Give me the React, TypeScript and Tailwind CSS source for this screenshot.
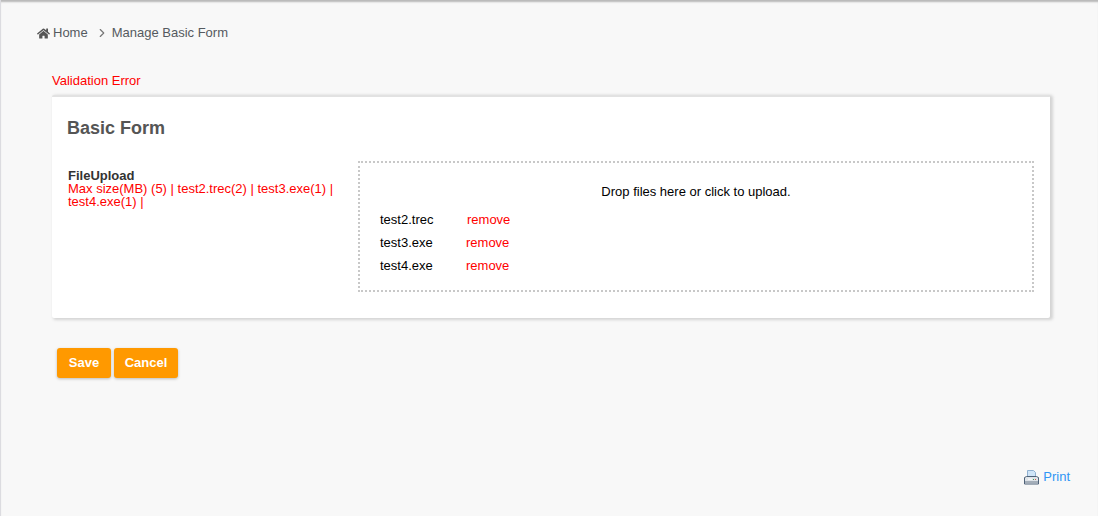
import React from 'react';
import { FaHome } from 'react-icons/fa';
import { FiChevronRight } from 'react-icons/fi';

const files = [
    { name: 'test2.trec', gap: 'w-[87px]' },
    { name: 'test3.exe', gap: 'w-[86px]' },
    { name: 'test4.exe', gap: 'w-[86px]' },
];

const PrintIcon = () => (
    <svg width="15" height="15" viewBox="0 0 15 15" className="shrink-0">
        <path d="M3.5 0.5h6l2 2v5h-8z" fill="#cfe4f7" stroke="#8fb0d0" />
        <path d="M0.5 7.5l2-1h10l2 1v6.5h-14z" fill="#dfe4e9" stroke="#4f6278" />
        <rect x="1" y="11" width="13" height="2.5" fill="#a4aeb9" />
        <rect x="4" y="8.5" width="4" height="1.5" fill="#f4f6f8" />
        <rect x="9" y="9" width="1" height="1" fill="#3aa655" />
        <rect x="11" y="9" width="1" height="1" fill="#d9534f" />
    </svg>
);

const App: React.FC = () => {
    return (
        <div className="flex h-[516px] flex-col overflow-hidden border-l border-[#dcdce0] bg-[#f8f8f8] font-['Liberation_Sans',Arial,sans-serif] shadow-[inset_0_3px_2px_-1px_#b8b8b8]">
            <nav className="ml-[36px] mt-[25px] flex h-[16px] items-center text-[13px] leading-[16px] text-[#555a60]">
                <FaHome className="mr-[3px] text-[13px] text-[#555]" />
                <span>Home</span>
                <FiChevronRight className="ml-[7px] mr-[3px] text-[14px] text-[#777]" />
                <span>Manage Basic Form</span>
            </nav>

            <p className="ml-[51px] mt-[32px] h-[16px] text-[13px] leading-[16px] text-[#ff0000]">Validation Error</p>

            <section className="ml-[51px] mt-[6px] h-[223px] w-[998px] rounded-[2px] border-t-2 border-[#e2e2e2] bg-white shadow-[2px_1px_3px_1px_#d4d4d4]">
                <h2 className="ml-[15px] mt-[21px] h-[21px] text-[18px] font-bold leading-[21px] text-[#555555]">Basic Form</h2>

                <div className="mt-[23px] flex">
                    <div className="ml-[16px] w-[290px] text-[13px] leading-[13px]">
                        <div className="mt-[7px] font-bold text-[#333333]">FileUpload</div>
                        <div className="text-[#ff0000]">
                            Max size(MB) (5) | test2.trec(2) | test3.exe(1) | test4.exe(1) |
                        </div>
                    </div>

                    <div className="-mt-[1px] ml-0 h-[131px] w-[676px] border-2 border-dotted border-[#c8c8c8] pt-[21px] text-[13px] leading-[16px] text-black">
                        <div className="text-center">Drop files here or click to upload.</div>
                        <ul className="ml-[20px] mt-[12px] flex flex-col gap-[7px]">
                            {files.map(file => (
                                <li key={file.name} className="flex h-[16px]">
                                    <span className={file.gap}>{file.name}</span>
                                    <span className="text-[#ff0000]">remove</span>
                                </li>
                            ))}
                        </ul>
                    </div>
                </div>
            </section>

            <div className="ml-[56px] mt-[30px] flex gap-[3px]">
                <button className="h-[30px] w-[54px] rounded-[3px] bg-[#ff9900] text-[13px] font-bold text-white shadow-[0_1px_3px_#bbbbbb]">Save</button>
                <button className="h-[30px] w-[64px] rounded-[3px] bg-[#ff9900] text-[13px] font-bold text-white shadow-[0_1px_3px_#bbbbbb]">Cancel</button>
            </div>

            <div className="ml-auto mr-[28px] mt-[91px] flex items-center gap-[4px] text-[13px] leading-[16px] text-[#2f96f5]">
                <PrintIcon />
                <span>Print</span>
            </div>
        </div>
    );
};

export default App;
